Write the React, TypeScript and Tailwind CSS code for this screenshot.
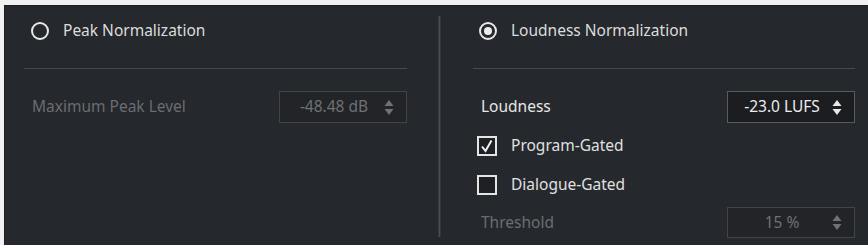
import React from 'react';

function Radio({ checked }: { checked?: boolean }) {
    return (
        <span className="w-[18px] h-[18px] rounded-full border-[2.5px] border-[#e8e8e8] flex items-center justify-center shrink-0">
            {checked && <span className="w-[8px] h-[8px] rounded-full bg-[#ececec]" />}
        </span>
    );
}

function Checkbox({ checked }: { checked?: boolean }) {
    return (
        <span className="w-[20px] h-[20px] border-2 border-[#e4e4e4] bg-[#1e2023] flex items-center justify-center shrink-0">
            {checked && (
                <svg width="14" height="14" viewBox="0 0 14 14">
                    <path d="M2 7.5 L5.5 12 L11.5 1.5" fill="none" stroke="#f0f0f0" strokeWidth="2" />
                </svg>
            )}
        </span>
    );
}

function Arrows({ color }: { color: string }) {
    return (
        <svg width="10" height="17" viewBox="0 0 10 17">
            <path d="M5 1 L9.5 7 L0.5 7 Z" fill={color} />
            <path d="M5 16 L9.5 10 L0.5 10 Z" fill={color} />
        </svg>
    );
}

function SpinBox({ value, disabled, h = 'h-[32px]' }: { value: string; disabled?: boolean; h?: string }) {
    return (
        <div
            className={
                'w-[128px] flex items-center pl-[10px] pr-[12px] border ' + h + ' ' +
                (disabled ? 'border-[#414448] bg-[#222428] text-[#6e7175]' : 'border-[#585b60] bg-[#1b1d20] text-[#ececec]')
            }
        >
            <span className="flex-1 text-center pr-[6px]">{value}</span>
            <Arrows color={disabled ? '#6e7175' : '#e8e8e8'} />
        </div>
    );
}

export default function App() {
    return (
        <div className="w-[868px] h-[245px] bg-[#f1f1f1] pt-[5px] pl-[4px] overflow-hidden" style={{ fontFamily: '"Noto Sans", "Open Sans", sans-serif' }}>
            <div className="h-full bg-[#25282c] border-l border-t border-[#1b1d20] flex text-[15.5px]">
                {/* Peak */}
                <div className="ml-[19px] w-[383px] pt-[15px] flex flex-col">
                    <div className="h-[20px] flex items-center gap-[14px] pl-[7px] text-[#dcdcdc]">
                        <Radio />
                        <span>Peak Normalization</span>
                    </div>
                    <div className="mt-[27px] h-px bg-[#46494d]" />
                    <div className="mt-[22px] flex items-center justify-between pl-[8px]">
                        <span className="text-[#6a6d71]">Maximum Peak Level</span>
                        <SpinBox value="-48.48 dB" disabled />
                    </div>
                </div>

                {/* divider */}
                <div className="ml-[31px] mt-[10px] mb-[8px] w-[3px] bg-[#34373b] flex justify-center">
                    <div className="w-px bg-[#4a4d51]" />
                </div>

                {/* Loudness */}
                <div className="ml-[32px] w-[382px] pt-[15px] flex flex-col">
                    <div className="h-[20px] flex items-center gap-[14px] pl-[6px] text-[#dcdcdc]">
                        <Radio checked />
                        <span>Loudness Normalization</span>
                    </div>
                    <div className="mt-[27px] h-px bg-[#46494d]" />
                    <div className="mt-[22px] flex items-center justify-between pl-[8px]">
                        <span className="text-[#e6e6e6]">Loudness</span>
                        <SpinBox value="-23.0 LUFS" />
                    </div>
                    <div className="mt-[13px] h-[20px] flex items-center gap-[14px] pl-[4px] text-[#e0e0e0]">
                        <Checkbox checked />
                        <span>Program-Gated</span>
                    </div>
                    <div className="mt-[19px] h-[20px] flex items-center gap-[14px] pl-[4px] text-[#e0e0e0]">
                        <Checkbox />
                        <span>Dialogue-Gated</span>
                    </div>
                    <div className="mt-[12px] flex items-center justify-between pl-[8px]">
                        <span className="text-[#6a6d71]">Threshold</span>
                        <SpinBox value="15 %" disabled h="h-[31px]" />
                    </div>
                </div>
            </div>
        </div>
    );
}
